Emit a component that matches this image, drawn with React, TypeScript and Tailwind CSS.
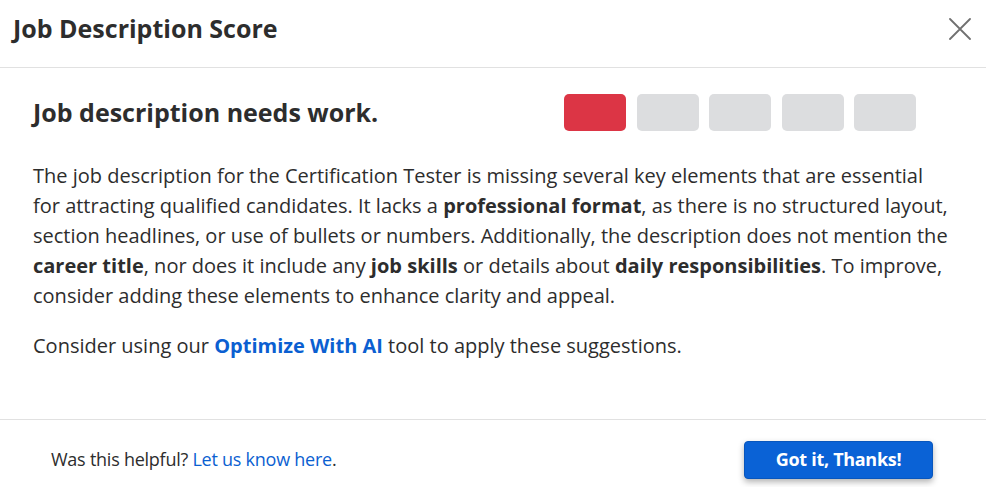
const bars = ['bg-[#dc3545]', 'bg-[#dcdddf]', 'bg-[#dcdddf]', 'bg-[#dcdddf]', 'bg-[#dcdddf]'];

export default function App() {
    return (
        <div className="w-[986px] h-[487px] bg-white text-[#2d2d2d] flex flex-col" style={{ fontFamily: '"Open Sans", sans-serif' }}>
            {/* Header */}
            <div className="h-[68px] flex items-start justify-between pl-[13px] pr-[15px] pt-[10px] border-b border-[#e1e1e1]">
                <h2 className="text-[25px] font-bold text-[#2d2d2d]">Job Description Score</h2>
                <button className="text-[#707070] mt-[8px]">
                    <svg width="22" height="22" viewBox="0 0 22 22" fill="none" stroke="currentColor" strokeWidth="1.8" strokeLinecap="round">
                        <path d="M1 1L21 21M21 1L1 21" />
                    </svg>
                </button>
            </div>

            {/* Body */}
            <div className="flex-1 px-[33px]">
                <div className="flex items-center justify-between mt-[26px] pr-[37px]">
                    <h3 className="text-[25px] font-bold text-[#2d2d2d]">Job description needs work.</h3>
                    <div className="flex gap-[10.5px]">
                        {bars.map((c, i) => (
                            <div key={i} className={`w-[62px] h-[37px] rounded-[5px] ${c}`} />
                        ))}
                    </div>
                </div>
                <p className="mt-[29px] text-[20px] leading-[30px]">
                    The job description for the Certification Tester is missing several key elements that are essential for attracting qualified candidates. It lacks a <b>professional format</b>, as there is no structured layout, section headlines, or use of bullets or numbers. Additionally, the description does not mention the <b>career title</b>, nor does it include any <b>job skills</b> or details about <b>daily responsibilities</b>. To improve, consider adding these elements to enhance clarity and appeal.
                </p>
                <p className="mt-[20px] text-[20px] leading-[30px]">
                    Consider using our <span className="font-bold text-[#0b5fd1]">Optimize With AI</span> tool to apply these suggestions.
                </p>
            </div>

            {/* Footer */}
            <div className="h-[68px] border-t border-[#e1e1e1] flex items-center justify-between pl-[51px] pr-[53px] pt-[12px]">
                <p className="text-[18px] tracking-[-0.25px]">
                    Was this helpful? <a className="text-[#0b5fd1]">Let us know here</a>.
                </p>
                <button className="w-[189px] h-[38px] rounded-[4px] bg-[#0a62d6] text-white text-[18px] font-bold tracking-[-0.3px] shadow-[0_3px_6px_rgba(0,0,0,0.3)] border border-[#0856bd]">
                    Got it, Thanks!
                </button>
            </div>
        </div>
    );
}
